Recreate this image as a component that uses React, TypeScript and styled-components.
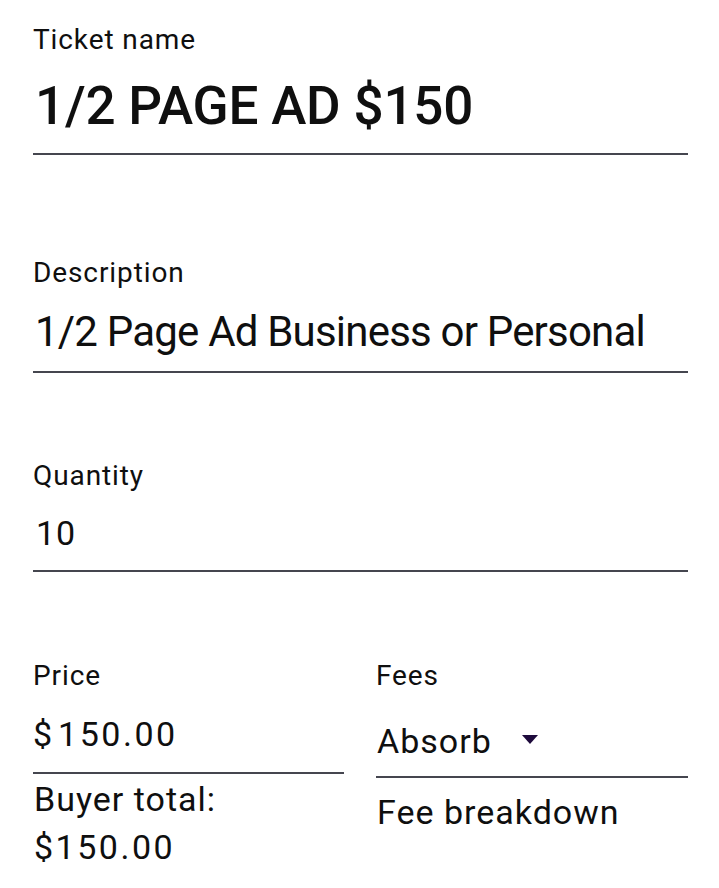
import * as React from "react";
import styled, { createGlobalStyle } from "styled-components";

const GlobalStyle = createGlobalStyle`
  html, body {
    margin: 0;
    padding: 0;
    background: #ffffff;
  }
  body {
    font-family: Roboto, "Liberation Sans", Arial, sans-serif;
    color: #0f0f0f;
  }
`;

const Form = styled.div`
  width: 655px;
  padding: 22px 31px 0 33px;
  display: flex;
  flex-direction: column;
`;

const Field = styled.div<{ gap?: number }>`
  display: flex;
  flex-direction: column;
  margin-top: ${({ gap }) => gap ?? 0}px;
`;

const Label = styled.div`
  font-size: 28px;
  line-height: 36px;
  letter-spacing: 0.9px;
  font-weight: 400;
`;

const InputBox = styled.div<{ top: number; bottom: number }>`
  display: flex;
  align-items: center;
  margin-top: ${({ top }) => top}px;
  padding-bottom: ${({ bottom }) => bottom}px;
  border-bottom: 2px solid #45464f;
`;

const TitleValue = styled.div`
  font-size: 53px;
  line-height: 62px;
  font-weight: 500;
  letter-spacing: -0.2px;
  padding-left: 2px;
`;

const TextValue = styled.div`
  font-size: 42px;
  line-height: 50px;
  letter-spacing: -0.8px;
  padding-left: 2px;
`;

const NumberValue = styled.div<{ indent?: number }>`
  font-size: 34px;
  line-height: 42px;
  letter-spacing: 1px;
  padding-left: ${({ indent }) => indent ?? 3}px;
`;

const Row = styled.div`
  display: grid;
  grid-template-columns: 311px 312px;
  column-gap: 32px;
  margin-top: 86px;
`;

const Column = styled.div`
  display: flex;
  flex-direction: column;
`;

const SelectValue = styled.div`
  font-size: 34px;
  line-height: 42px;
  letter-spacing: 1px;
  padding-left: 1px;
  display: flex;
  align-items: center;
  gap: 30px;
`;

const Caret = styled.span`
  width: 0;
  height: 0;
  border-left: 8.5px solid transparent;
  border-right: 8.5px solid transparent;
  border-top: 9px solid #1e0a3c;
  margin-top: -4px;
`;

const Helper = styled.div<{ top: number }>`
  font-size: 34px;
  line-height: 48px;
  letter-spacing: 1px;
  margin-top: ${({ top }) => top}px;
  padding-left: 1px;
`;

const Currency = styled.span`
  margin-right: 5px;
`;

const Amount = styled.span`
  letter-spacing: 2.5px;
`;

export default function App() {
  return (
    <>
      <GlobalStyle />
      <Form>
        <Field>
          <Label>Ticket name</Label>
          <InputBox top={17} bottom={16}>
            <TitleValue>1/2 PAGE AD $150</TitleValue>
          </InputBox>
        </Field>

        <Field gap={100}>
          <Label>Description</Label>
          <InputBox top={16} bottom={14}>
            <TextValue>1/2 Page Ad Business or Personal</TextValue>
          </InputBox>
        </Field>

        <Field gap={85}>
          <Label>Quantity</Label>
          <InputBox top={18} bottom={16}>
            <NumberValue>10</NumberValue>
          </InputBox>
        </Field>

        <Row>
          <Column>
            <Label>Price</Label>
            <InputBox top={19} bottom={17}>
              <NumberValue indent={0}>
                <Currency>$</Currency>
                <Amount>150.00</Amount>
              </NumberValue>
            </InputBox>
            <Helper top={1}>
              Buyer total:
              <br />
              <Amount>$150.00</Amount>
            </Helper>
          </Column>
          <Column>
            <Label>Fees</Label>
            <InputBox top={26} bottom={14}>
              <SelectValue>
                Absorb
                <Caret />
              </SelectValue>
            </InputBox>
            <Helper top={10}>Fee breakdown</Helper>
          </Column>
        </Row>
      </Form>
    </>
  );
}
